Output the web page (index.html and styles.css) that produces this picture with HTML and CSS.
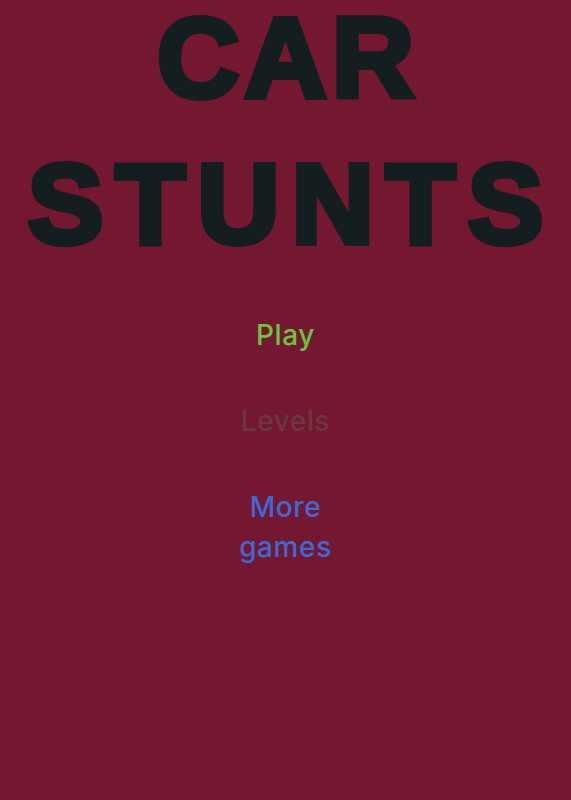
FILE: index.html
```html
<!DOCTYPE html>
<html>
<head>
<meta charset="utf-8">
<link rel="stylesheet" href="styles.css">
</head>
<body>
<main class="screen">
  <h1 class="title"><span class="line car">CAR</span><span class="line stunts">STUNTS</span></h1>
  <nav class="menu">
    <a class="item play">Play</a>
    <a class="item levels">Levels</a>
    <a class="item more">More games</a>
  </nav>
</main>
</body>
</html>
```

FILE: styles.css
```css
html, body {
  margin: 0;
  padding: 0;
  background: #731830;
}
.screen {
  width: 571px;
  height: 800px;
  display: flex;
  flex-direction: column;
  align-items: center;
  overflow: hidden;
}
.title {
  margin: 0;
  font-family: "Liberation Sans", Arial, sans-serif;
  font-weight: 900;
  font-size: 114px;
  line-height: 146px;
  color: #141d1f;
  text-align: center;
  -webkit-text-stroke: 6px #141d1f;
  paint-order: stroke fill;
  display: flex;
  flex-direction: column;
  align-items: center;
}
.line {
  display: block;
  white-space: nowrap;
}
.car {
  line-height: 116px;
  margin-bottom: 15px;
  letter-spacing: 5px;
  margin-right: -5px;
}
.stunts {
  letter-spacing: 12px;
  margin-right: -12px;
}
.menu {
  margin-top: 38px;
  width: 110px;
  display: flex;
  flex-direction: column;
  align-items: center;
  gap: 46px;
  font-family: "Inter", "DejaVu Sans", sans-serif;
  font-weight: 500;
  font-size: 28px;
  line-height: 40px;
  letter-spacing: 0.6px;
  text-align: center;
}
.item {
  display: block;
}
.play { color: #6ec23f; }
.levels { color: #6d373c; }
.more { color: #3d68d6; }
```
